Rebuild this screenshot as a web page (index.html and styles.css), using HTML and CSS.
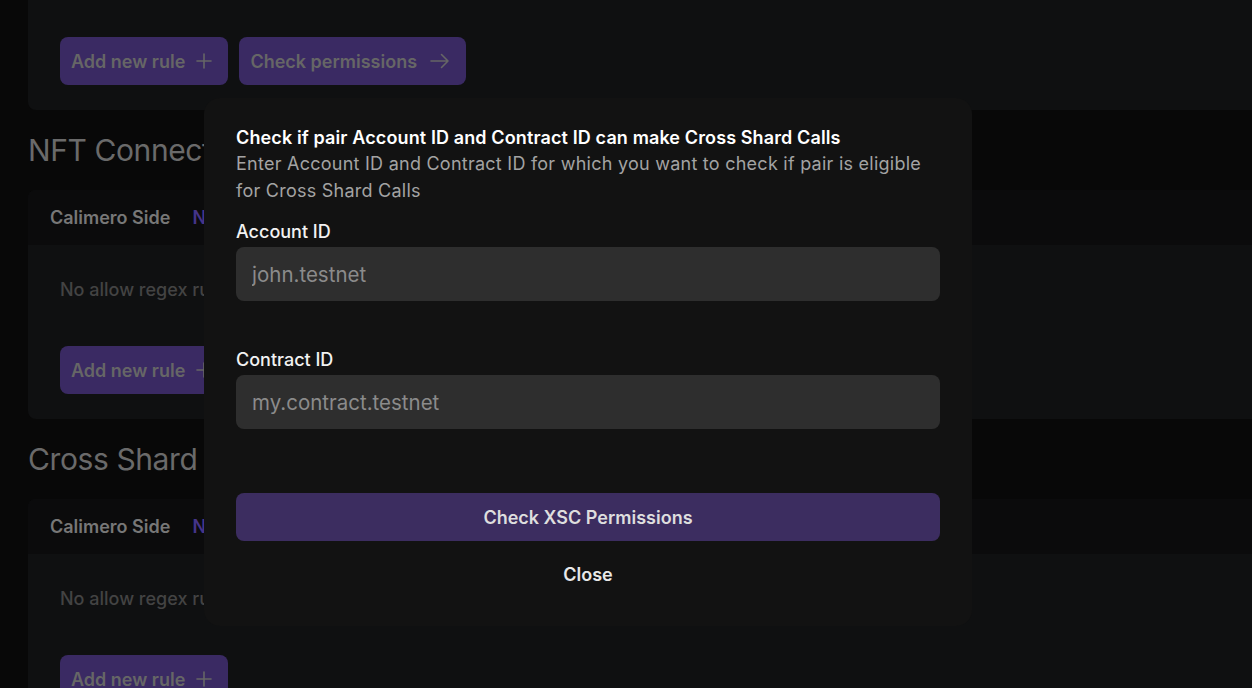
FILE: index.html
```html
<!DOCTYPE html>
<html lang="en">
<head>
<meta charset="utf-8">
<title>Permissions</title>
<link rel="stylesheet" href="styles.css">
</head>
<body>
<main class="page">
  <section class="card card-top">
    <div class="card-body">
      <div class="actions">
        <button class="btn">Add new rule
          <svg class="ico" viewBox="0 0 16 16" width="16" height="16"><path d="M8 1v14M1 8h14" stroke="currentColor" stroke-width="1.6" fill="none" stroke-linecap="round"/></svg>
        </button>
        <button class="btn">Check permissions
          <svg class="ico arrow" viewBox="0 0 20 16" width="20" height="16"><path d="M1 8h17M11.5 1.5L18 8l-6.5 6.5" stroke="currentColor" stroke-width="1.6" fill="none" stroke-linecap="round" stroke-linejoin="round"/></svg>
        </button>
      </div>
    </div>
  </section>

  <h2 class="section-title">NFT Connector</h2>
  <section class="card">
    <div class="tabs">
      <span class="tab">Calimero Side</span>
      <span class="tab tab-active">NEAR Side</span>
    </div>
    <div class="card-body">
      <p class="empty">No allow regex rules</p>
      <div class="actions">
        <button class="btn">Add new rule
          <svg class="ico" viewBox="0 0 16 16" width="16" height="16"><path d="M8 1v14M1 8h14" stroke="currentColor" stroke-width="1.6" fill="none" stroke-linecap="round"/></svg>
        </button>
      </div>
    </div>
  </section>

  <h2 class="section-title">Cross Shard Calls</h2>
  <section class="card">
    <div class="tabs">
      <span class="tab">Calimero Side</span>
      <span class="tab tab-active">NEAR Side</span>
    </div>
    <div class="card-body">
      <p class="empty">No allow regex rules</p>
      <div class="actions">
        <button class="btn">Add new rule
          <svg class="ico" viewBox="0 0 16 16" width="16" height="16"><path d="M8 1v14M1 8h14" stroke="currentColor" stroke-width="1.6" fill="none" stroke-linecap="round"/></svg>
        </button>
      </div>
    </div>
  </section>
</main>

<div class="modal" role="dialog">
  <h3 class="modal-title">Check if pair Account ID and Contract ID can make Cross Shard Calls</h3>
  <p class="modal-sub">Enter Account ID and Contract ID for which you want to check if pair is eligible for Cross Shard Calls</p>
  <label class="field-label">Account ID</label>
  <input class="field" type="text" placeholder="john.testnet">
  <label class="field-label second">Contract ID</label>
  <input class="field" type="text" placeholder="my.contract.testnet">
  <button class="primary">Check XSC Permissions</button>
  <button class="close">Close</button>
</div>
</body>
</html>
```

FILE: styles.css
```css
* { box-sizing: border-box; }
html, body { margin: 0; padding: 0; }
body {
  background: #080808;
  font-family: Inter, "Noto Sans", sans-serif;
  width: 1252px;
  height: 688px;
  overflow: hidden;
  position: relative;
}
.page {
  padding-left: 28px;
  margin-right: -40px;
}
.card {
  background: #0f1011;
  border-radius: 8px;
  overflow: hidden;
}
.card-top {
  margin-top: -20px;
}
.card-top .card-body {
  padding-top: 57px;
}
.card-body {
  padding: 0 32px 25px;
}
.actions {
  display: flex;
  gap: 11px;
}
.btn {
  display: flex;
  align-items: center;
  gap: 11px;
  height: 48px;
  padding: 0 16px 0 11px;
  border: 0;
  border-radius: 8px;
  background: #3a2a63;
  color: #666666;
  font-family: inherit;
  font-size: 18px;
  font-weight: 600;
}
.ico { display: block; }
.arrow { margin-left: 2px; }
.section-title {
  margin: 0;
  height: 80px;
  display: flex;
  align-items: center;
  font-size: 30px;
  font-weight: 400;
  color: #6a6a6a;
  letter-spacing: -0.4px;
}
.tabs {
  background: #0b0b0c;
  height: 55px;
  display: flex;
  align-items: center;
  gap: 22px;
  padding-left: 22px;
}
.tab {
  font-size: 18px;
  font-weight: 600;
  color: #777777;
}
.tab-active { color: #45348a; }
.empty {
  margin: 0;
  padding: 34px 0 45px;
  font-size: 18px;
  line-height: 22px;
  color: #434343;
  font-weight: 500;
}

.modal {
  position: absolute;
  top: 98px;
  left: 204px;
  width: 768px;
  height: 528px;
  background: #121212;
  border-radius: 16px;
  padding: 28px 32px 0;
  display: flex;
  flex-direction: column;
}
.modal-title {
  margin: 0;
  font-size: 18px;
  line-height: 24px;
  font-weight: 600;
  color: #ffffff;
  letter-spacing: 0.12px;
}
.modal-sub {
  margin: 0;
  font-size: 18px;
  line-height: 27px;
  color: #a3a3a3;
  font-weight: 400;
  letter-spacing: 0.25px;
}
.field-label {
  margin-top: 16px;
  font-size: 18px;
  line-height: 24px;
  font-weight: 500;
  color: #f2f2f2;
}
.field-label.second { margin-top: 47px; }
.field {
  margin-top: 3px;
  height: 54px;
  width: 100%;
  border: 0;
  border-radius: 8px;
  background: #2e2e2e;
  padding: 0 16px;
  font-family: inherit;
  font-size: 20.5px;
  color: #eeeeee;
  outline: none;
}
.field::placeholder { color: #8b8b8b; }
.primary {
  margin-top: 64px;
  height: 48px;
  width: 100%;
  border: 0;
  border-radius: 8px;
  background: #3c2d60;
  color: #dedede;
  font-family: inherit;
  font-size: 18px;
  font-weight: 600;
}
.close {
  margin-top: 22px;
  align-self: center;
  background: none;
  border: 0;
  padding: 0;
  line-height: 24px;
  font-family: inherit;
  font-size: 18px;
  font-weight: 600;
  color: #e8e8e8;
}
```
